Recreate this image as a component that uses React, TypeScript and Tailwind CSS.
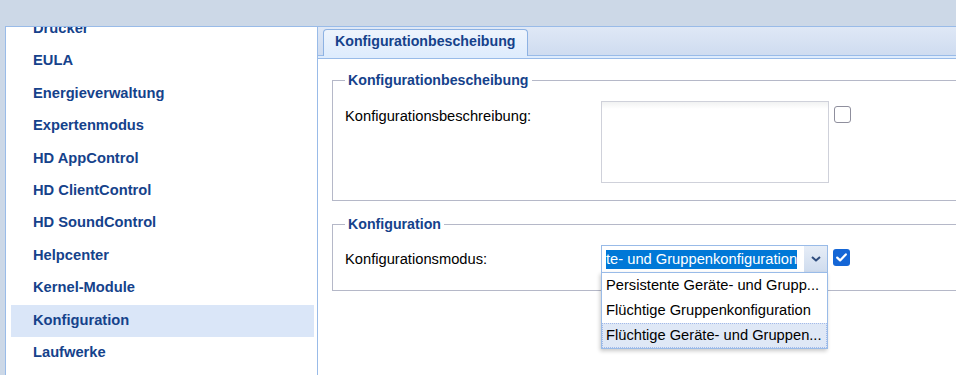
import React from 'react';

const navItems = [
  'Drucker',
  'EULA',
  'Energieverwaltung',
  'Expertenmodus',
  'HD AppControl',
  'HD ClientControl',
  'HD SoundControl',
  'Helpcenter',
  'Kernel-Module',
  'Konfiguration',
  'Laufwerke',
];

const modes = [
  'Persistente Geräte- und Grupp...',
  'Flüchtige Gruppenkonfiguration',
  'Flüchtige Geräte- und Gruppen...',
];

function Checkbox({ checked }: { checked?: boolean }) {
  if (checked) {
    return (
      <div className="ml-[5px] mt-[4px] flex h-[17px] w-[17px] shrink-0 items-center justify-center rounded-[3px] bg-[#1466d6]">
        <svg width="11" height="9" viewBox="0 0 11 9" fill="none">
          <path d="M1.2 4.6 L4.1 7.4 L9.8 1.4" stroke="white" strokeWidth="2.2" strokeLinecap="round" strokeLinejoin="round" />
        </svg>
      </div>
    );
  }
  return <div className="ml-[5px] mt-[5px] h-[17px] w-[17px] shrink-0 rounded-[3px] border border-[#8f8f9d] bg-white" />;
}

export default function App() {
  return (
    <div className="flex h-[375px] w-[956px] overflow-hidden bg-[#ccd8e7] pl-[5px] pt-[26px] font-['Liberation_Sans',Arial,sans-serif] text-[14.7px] text-black">
      {/* Navigation list */}
      <div className="h-full w-[313px] shrink-0 overflow-hidden border border-b-0 border-[#99bbe8] bg-white pl-[5px] pr-[3px]">
        <ul className="mt-[-13.6px]">
          {navItems.map((item) => (
            <li
              key={item}
              className={`flex h-[32.4px] items-center pb-[3px] pl-[22px] font-bold text-[#15428b] ${
                item === 'Konfiguration' ? 'bg-[#dae6f8]' : ''
              }`}
            >
              {item}
            </li>
          ))}
        </ul>
      </div>

      {/* Content */}
      <div className="flex h-full min-w-0 flex-1 flex-col overflow-hidden bg-white">
        <div className="flex h-[30px] shrink-0 items-end border-y border-[#99bbe8] bg-gradient-to-b from-[#dfe8f6] to-[#cfdcf0] pl-[5px]">
          <div className="mb-[-1px] h-[27px] rounded-t-[4px] border border-b-0 border-[#8db2e3] bg-gradient-to-b from-[#eef4fc] to-[#deecfd] px-[11px] pt-[2px] text-[14.2px] font-bold leading-[18px] text-[#15428b]">
            Konfigurationbescheibung
          </div>
        </div>
        <div className="h-[3px] shrink-0 border-b border-[#99bbe8] bg-[#deecfd]" />

        <div className="pl-[14px]">
          <fieldset className="mt-[13px] w-[700px] border border-[#b5b8c8] pb-[17px] pl-[12px] pt-[13px]">
            <legend className="px-[3px] text-[14.2px] font-bold leading-[16px] text-[#15428b]">Konfigurationbescheibung</legend>
            <div className="flex items-start">
              <label className="w-[256px] shrink-0 pt-[6px] leading-[18px]">Konfigurationsbeschreibung:</label>
              <div className="h-[82px] w-[228px] shrink-0 border border-[#cfd1da] bg-white bg-gradient-to-b from-[#f1f2f2] to-white bg-[length:100%_7px] bg-no-repeat" />
              <Checkbox />
            </div>
          </fieldset>

          <fieldset className="mt-[15px] w-[700px] border border-[#b5b8c8] pb-[17px] pl-[12px] pt-[13px]">
            <legend className="px-[3px] text-[14.2px] font-bold leading-[16px] text-[#15428b]">Konfiguration</legend>
            <div className="flex items-start">
              <label className="w-[256px] shrink-0 pt-[5px] leading-[18px]">Konfigurationsmodus:</label>
              <div className="relative flex h-[28px] w-[227px] shrink-0 border border-[#99bbe8] bg-white">
                <div className="flex min-w-0 flex-1 items-center overflow-hidden pl-[4px]">
                  <span className="whitespace-nowrap bg-[#0078d7] leading-[19px] text-white">te- und Gruppenkonfiguration</span>
                </div>
                <div className="flex w-[23px] shrink-0 items-center justify-center bg-gradient-to-b from-[#e6edf7] to-[#cfdcee]">
                  <svg width="10" height="6" viewBox="0 0 10 6" fill="none">
                    <path d="M1 1 L5 4.6 L9 1" stroke="#2f4d7e" strokeWidth="2" strokeLinejoin="round" />
                  </svg>
                </div>

                {/* open dropdown */}
                <ul className="absolute left-[-1px] top-[26px] z-10 w-[227px] border border-[#99bbe8] bg-white shadow-[-1px_2px_4px_rgba(0,0,0,0.22)]">
                  {modes.map((m, i) => (
                    <li
                      key={m}
                      className={`h-[25px] whitespace-nowrap border pl-[3px] leading-[23px] ${
                        i === 2 ? 'border-dotted border-[#a3bae9] bg-[#dfe8f6]' : 'border-transparent'
                      }`}
                    >
                      {m}
                    </li>
                  ))}
                </ul>
              </div>
              <Checkbox checked />
            </div>
          </fieldset>
        </div>
      </div>
    </div>
  );
}
